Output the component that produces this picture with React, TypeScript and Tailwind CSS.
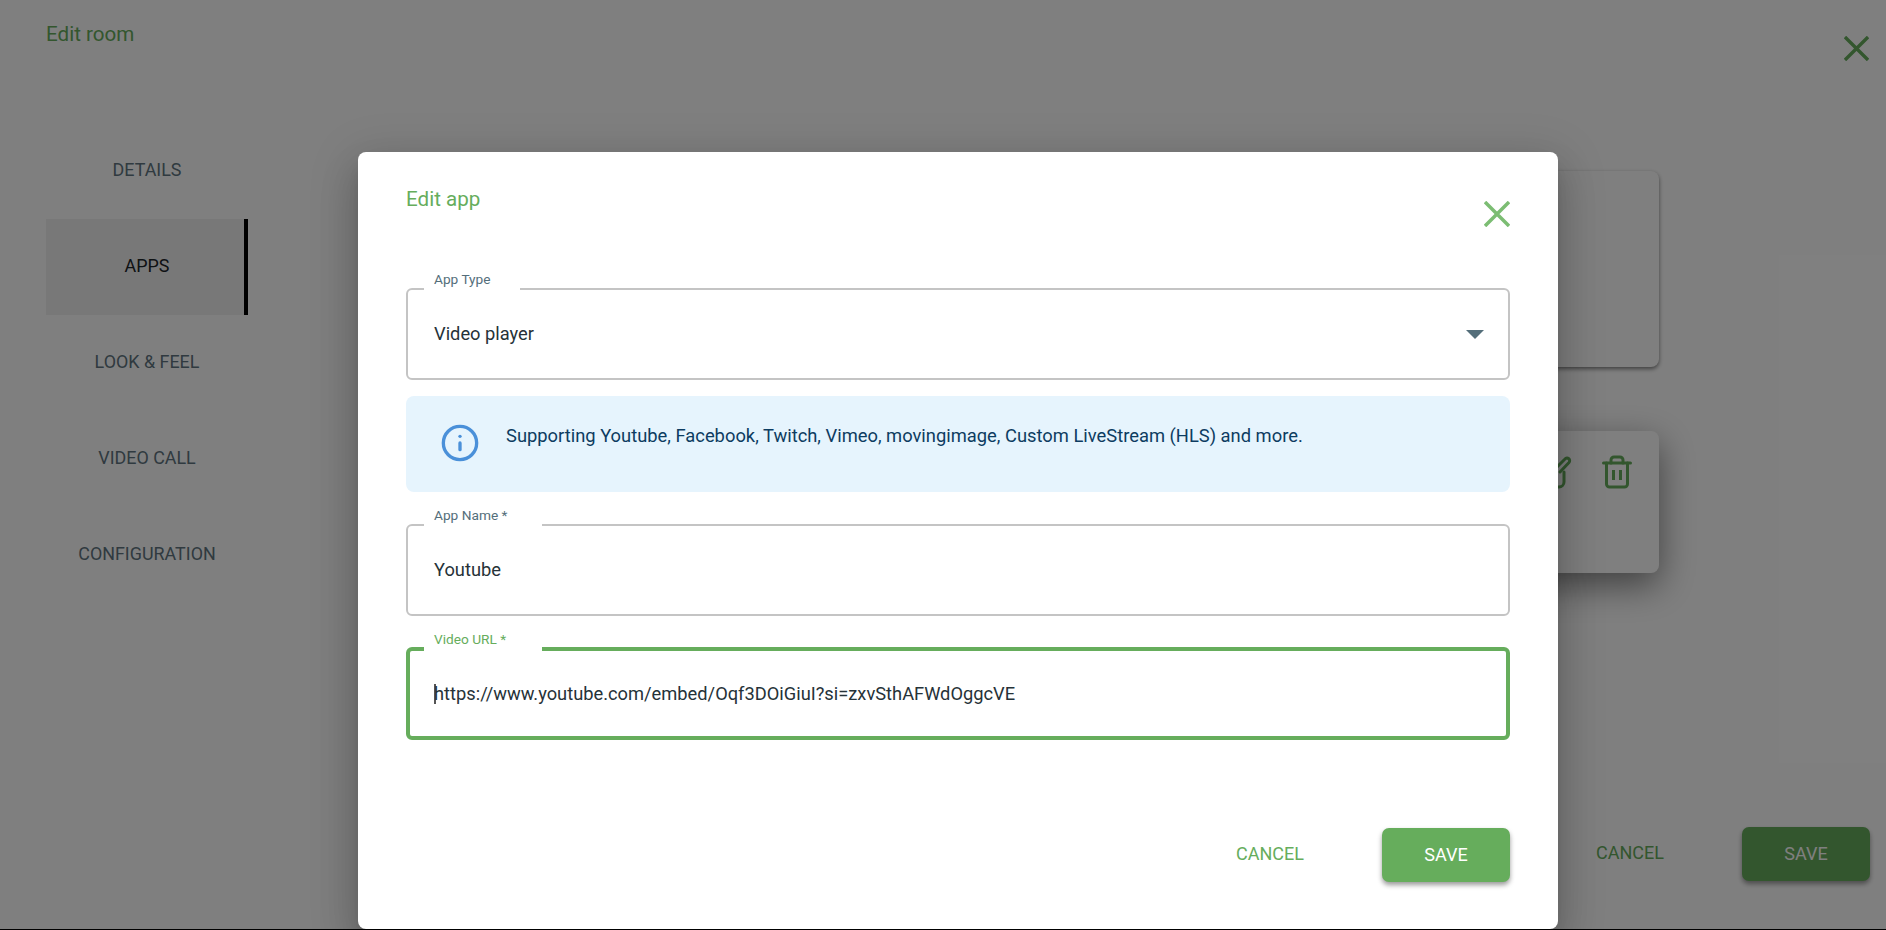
import type { ReactNode } from 'react'
import { Info } from 'lucide-react'

const tabs = ['DETAILS', 'APPS', 'LOOK & FEEL', 'VIDEO CALL', 'CONFIGURATION']

function CloseIcon({ className }: { className: string }) {
  return (
    <svg viewBox="0 0 26 26" className={className} fill="none" stroke="currentColor" strokeWidth="3.5">
      <path d="M1 1 25 25M25 1 1 25" />
    </svg>
  )
}

function BackgroundPage() {
  return (
    <div className="flex h-[929px] flex-col bg-white">
      <div className="flex h-[123px] shrink-0 items-start justify-between pl-[46px] pr-[17px]">
        <h1 className="mt-[20px] text-[20.6px] leading-[28px] text-[#66ad5c]">Edit room</h1>
        <CloseIcon className="mt-[36px] h-[25px] w-[25px] text-[#66ad5c]" />
      </div>

      <div className="flex min-h-0 flex-1">
        <nav className="ml-[46px] w-[202px] shrink-0">
          {tabs.map(tab => (
            <div
              key={tab}
              className={`flex h-[96px] items-center justify-center pb-[2px] text-[17.9px] ${
                tab === 'APPS'
                  ? 'bg-[#f0f0f0] text-[#1c2429] shadow-[inset_-4px_0_0_#000]'
                  : 'text-[#607480]'
              }`}
            >
              {tab}
            </div>
          ))}
        </nav>

        <div className="ml-[150px] flex flex-1 flex-col pr-[16px]">
          <div className="mr-[211px] mt-[48px] h-[196px] rounded-[8px] bg-white shadow-[0_2px_4px_rgba(0,0,0,0.5)]" />
          <div className="mr-[211px] mt-[64px] flex h-[142px] justify-end gap-[30px] rounded-[8px] bg-white pr-[27px] pt-[24px] shadow-[0_12px_36px_rgba(0,0,0,0.5)]">
            <svg viewBox="0 0 38 34" className="h-[34px] w-[38px] text-[#66ad5c]" fill="none" stroke="currentColor" strokeWidth="3" strokeLinecap="round" strokeLinejoin="round">
              <path d="M30 17v10a5 5 0 0 1-5 5H8a6 6 0 0 1-6-6V8a6 6 0 0 1 6-6h12" />
              <path d="M22 13 31 4a2.6 2.6 0 0 1 4 3.5L26 17" />
            </svg>
            <svg viewBox="0 0 30 34" className="h-[34px] w-[30px] text-[#66ad5c]" fill="none" stroke="currentColor" strokeWidth="3" strokeLinecap="round" strokeLinejoin="round">
              <path d="M1.5 8h27" />
              <path d="M9 8V5a3 3 0 0 1 3-3h6a3 3 0 0 1 3 3v3" />
              <path d="M4.5 8v21a3 3 0 0 0 3 3h15a3 3 0 0 0 3-3V8" />
              <path d="M11.5 15v10M18.5 15v10" strokeLinecap="butt" />
            </svg>
          </div>

          <div className="mb-[48px] mt-auto flex items-center justify-end">
            <button className="mb-[3px] mr-[78px] text-[18px] text-[#66ad5c]">CANCEL</button>
            <button className="h-[54px] w-[128px] rounded-[7px] bg-[#66ad5c] pb-[2px] text-[18px] text-white shadow-[0_3px_5px_rgba(0,0,0,0.4)]">
              SAVE
            </button>
          </div>
        </div>
      </div>
    </div>
  )
}

function Field({
  label,
  labelClass,
  focused,
  className,
  children,
}: {
  label: string
  labelClass: string
  focused?: boolean
  className: string
  children: ReactNode
}) {
  return (
    <div
      className={`relative flex items-center justify-between rounded-[6px] text-[18.3px] text-[#263238] ${
        focused ? 'border-4 border-[#66ad5c] pl-[24px]' : 'border-2 border-[#c4c4c4] pl-[26px]'
      } ${className}`}
    >
      {children}
      <span
        className={`absolute bg-white pl-[10px] text-[13.7px] leading-[20px] ${labelClass} ${
          focused ? '-top-[22px] h-[22px] text-[#66ad5c]' : '-top-[21px] h-[21px] text-[#546e7a]'
        }`}
      >
        {label}
      </span>
    </div>
  )
}

function EditAppDialog() {
  return (
    <div className="absolute left-[358px] top-[152px] flex h-[777px] w-[1200px] flex-col rounded-[8px] bg-white px-[48px] shadow-[0_11px_15px_-7px_rgba(0,0,0,0.2),0_24px_38px_3px_rgba(0,0,0,0.14),0_9px_46px_8px_rgba(0,0,0,0.12)]">
      <div className="flex h-[136px] shrink-0 items-start justify-between">
        <h2 className="mt-[33px] text-[20.6px] leading-[28px] text-[#66ad5c]">Edit app</h2>
        <CloseIcon className="mt-[49px] h-[26px] w-[26px] text-[#7cbd73]" />
      </div>

      <Field label="App Type" labelClass="left-[16px] pr-[29px]" className="h-[92px] pr-[24px]">
        <span>Video player</span>
        <svg viewBox="0 0 18 9" className="h-[9px] w-[18px]">
          <path d="M0 0h18L9 9z" fill="#546e7a" />
        </svg>
      </Field>

      <div className="mt-[16px] flex h-[96px] gap-[26px] rounded-[8px] bg-[#e6f4fd] pl-[34px] pt-[29px] text-[#0d3c61]">
        <Info size={40} strokeWidth={2} className="-mt-[2px] text-[#4a90d9]" />
        <p className="mt-[1px] text-[18.35px] leading-[20px]">
          Supporting Youtube, Facebook, Twitch, Vimeo, movingimage, Custom LiveStream (HLS) and more.
        </p>
      </div>

      <Field label="App Name *" labelClass="left-[16px] pr-[35px]" className="mt-[32px] h-[92px]">
        <span>Youtube</span>
      </Field>

      <Field label="Video URL *" labelClass="left-[14px] pr-[36px]" focused className="mt-[31px] h-[93px]">
        <span className="flex items-center">
          <span className="-mr-[2px] h-[20px] w-[2px] bg-[#555]" />
          https://www.youtube.com/embed/Oqf3DOiGiuI?si=zxvSthAFWdOggcVE
        </span>
      </Field>

      <div className="mt-[88px] flex items-center justify-end">
        <button className="mb-[3px] mr-[78px] text-[18px] text-[#66ad5c]">CANCEL</button>
        <button className="h-[54px] w-[128px] rounded-[7px] bg-[#66ad5c] pb-[2px] text-[18px] text-white shadow-[0_3px_5px_rgba(0,0,0,0.4)]">
          SAVE
        </button>
      </div>
    </div>
  )
}

export default function App() {
  return (
    <div className="relative h-[930px] w-[1886px] overflow-hidden bg-black font-['Roboto',sans-serif]">
      <BackgroundPage />
      <div className="absolute inset-0 bg-black/50" />
      <EditAppDialog />
    </div>
  )
}
